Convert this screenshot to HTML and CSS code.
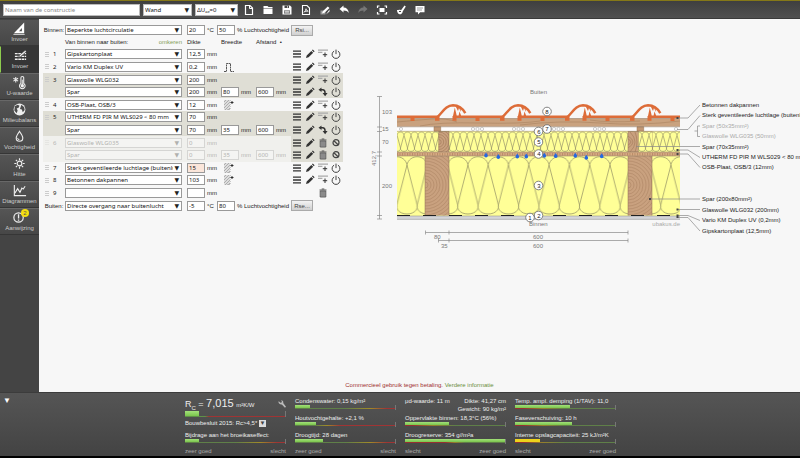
FILE: index.html
```html
<!DOCTYPE html>
<html lang="nl">
<head>
<meta charset="utf-8">
<title>U-waarde calculator</title>
<link rel="stylesheet" href="styles.css">
</head>
<body>
<svg class="defs" aria-hidden="true">
  <symbol id="list" viewBox="0 0 10 10"><path d="M1 2.2h8M1 5h8M1 7.8h8" stroke="#333" stroke-width="1.3"/></symbol>
  <symbol id="pencil" viewBox="0 0 10 10"><path d="M1 9l.7-2.6L6.3 1.9l1.900 1.900-4.600 4.500zM6.900 1.300L7.800.6l1.800 1.700-.8.9z" fill="#333"/></symbol>
  <symbol id="insert" viewBox="0 0 10 10"><path d="M0 1.200h10M0 3.300h4.400" stroke="#aaa" stroke-width="1.200"/><path d="M7 3.500v4.500M4.800 5.700h4.400" stroke="#333" stroke-width="1"/></symbol>
  <symbol id="power" viewBox="0 0 10 10"><path d="M3.100 2.100a3.900 3.900 0 1 0 3.800 0M5 .6v4.500" fill="none" stroke="#444" stroke-width="1"/></symbol>
  <symbol id="turn" viewBox="0 0 10 10"><path d="M2.500 2.800h2.200q2.300 0 2.300 2.800v1" fill="none" stroke="#333" stroke-width="1.500"/><path d="M3.500.5v4.600L.5 2.800zM4.600 6h5L7.100 9.300z" fill="#333"/></symbol>
  <symbol id="trash" viewBox="0 0 10 10"><path d="M1.500 2h7M3.700 1h2.600" stroke="#555" stroke-width="1"/><path d="M2.200 3h5.600v6H2.200z" fill="#aaa" stroke="#555" stroke-width=".9"/><path d="M4 3.500v5M6 3.500v5" stroke="#555" stroke-width=".7"/></symbol>
  <symbol id="ban" viewBox="0 0 10 10"><circle cx="5" cy="4.700" r="3" fill="none" stroke="#444" stroke-width="1.200"/><path d="M2.900 2.700l4.200 4" stroke="#444" stroke-width="1.200"/></symbol>
  <symbol id="hatch" viewBox="0 0 10 12"><path d="M0 1h6v10H0z" fill="#ddd"/><path d="M0 3l2-2M0 6l5-5M0 9l6-6M1 11l5-5M4 11l2-2" stroke="#999" stroke-width=".7"/><path d="M6.500 1v9.500H.5" fill="none" stroke="#aaa" stroke-width=".6" stroke-dasharray="1 1"/><path d="M8 2v3M6.500 3.500h3" stroke="#222" stroke-width=".9"/></symbol>
  <symbol id="pulse" viewBox="0 0 12 12"><path d="M1 10.500h2.500v-8h4v8H11" fill="none" stroke="#444" stroke-width=".9" stroke-dasharray="2 .5"/></symbol>
</svg>

<header class="topbar">
  <input class="field name" aria-label="Naam van de constructie" placeholder="Naam van de constructie">
  <span class="pick type"><select aria-label="Type"><option>Wand</option></select></span>
  <span class="pick delta"><select aria-label="Correctie"><option>ΔUₐₑ=0</option></select></span>
  <nav class="actions">
    <button aria-label="Nieuw"><svg viewBox="0 0 12 12"><path d="M2.500 1.500h4.500l2.500 2.500v6.500h-7z" fill="none" stroke="#fff" stroke-width="1.200"/><path d="M6.500 1.500v3h3" fill="none" stroke="#fff"/></svg></button>
    <button aria-label="Openen"><svg viewBox="0 0 12 12"><path d="M1.500 2h4l1 1h4v1.200h-9zM1.500 4.700h9v5.300h-9z" fill="#fff"/></svg></button>
    <button aria-label="Opslaan"><svg viewBox="0 0 12 12"><path d="M1.500 1.500h7.500l1.500 1.500v7.500h-9z" fill="#fff"/><path d="M3.500 1.500h4.500v2.500H3.500zM3 6.500h6v3H3z" fill="#484848"/><path d="M6.500 2v1.800M3.500 7.500h5M3.500 8.700h5" stroke="#fff" stroke-width=".7"/></svg></button>
    <button aria-label="PDF"><svg viewBox="0 0 12 12"><path d="M2.500 1.500h4.500l2.500 2.500v6.500h-7z" fill="none" stroke="#fff" stroke-width="1.100"/><path d="M6 4.500q0 2-2 4M6 5q.5 2 2.300 2.300M4.500 7.500l3.500-.5" fill="none" stroke="#fff" stroke-width=".8"/></svg></button>
    <button aria-label="Bewerken"><svg viewBox="0 0 12 12"><path d="M1.500 6.500h5v4h-5z" fill="#999"/><path d="M3 9.500l.8-2.300 5-4.700 1.700 1.600-5 4.700zM7 10.500l3.500-3v-2z" fill="#fff"/></svg></button>
    <button aria-label="Ongedaan maken"><svg viewBox="0 0 12 12"><path d="M1.500 5l4-3.500v2c3 0 5 2 5.300 5.500-1.300-1.800-3-2.500-5.300-2.500v2z" fill="#fff"/></svg></button>
    <button aria-label="Opnieuw"><svg viewBox="0 0 12 12"><path d="M10.500 5l-4-3.500v2c-3 0-5 2-5.300 5.500 1.300-1.800 3-2.500 5.300-2.500v2z" fill="#777"/></svg></button>
    <button aria-label="Volledig scherm"><svg viewBox="0 0 12 12"><path d="M1.500 4V2h2M8.500 2h2v2M10.500 8v2h-2M3.500 10h-2V8" fill="none" stroke="#fff" stroke-width="1.200"/><path d="M3.500 4h5v4h-5z" fill="#fff"/></svg></button>
    <button aria-label="Stijl"><svg viewBox="0 0 12 12"><path d="M2 6c2 0 2.500-.8 4 .3L9.500 1.500l1.300 1L7.700 7.500C7.500 9.500 6 10.500 4.500 10.300 3 10 2 8 2 6z" fill="#fff"/><path d="M4 7.500h2" stroke="#484848"/></svg></button>
    <button aria-label="Reactie"><svg viewBox="0 0 12 12"><path d="M1.500 2h9v6.300H6.200L4 10.500V8.300H1.500z" fill="#fff"/><path d="M3 4h6M3 6h5" stroke="#777" stroke-width=".7"/></svg></button>
  </nav>
</header>

<div class="work">
  <nav class="side">
    <a href="#"><svg viewBox="0 0 16 16"><path d="M2 13L13 1.500V13z" fill="#fff"/><path d="M7.500 11h3V7.500z" fill="#4c4c4c"/><path d="M1.500 14.300h12" stroke="#fff" stroke-width=".8"/></svg>Invoer</a>
    <a href="#" class="on"><svg viewBox="0 0 16 16"><path d="M2 6h12M2 9h12M2 12h12" stroke="#eee" stroke-width="1.400" stroke-dasharray="3 .6"/><path d="M6 10l1-2.500 6-5 1.300 1.500-6 5z" fill="#eee" stroke="#383838" stroke-width=".6"/></svg>Invoer</a>
    <a href="#"><svg viewBox="0 0 16 16"><path d="M4 2v6M1.500 3.500l5 3M6.500 3.500l-5 3" stroke="#eee" stroke-width="1.100"/><path d="M9.500 9V3a1.500 1.500 0 0 1 3 0v6a3 3 0 1 1-3 0z" fill="none" stroke="#eee" stroke-width="1.100"/><circle cx="11" cy="11.400" r="1.800" fill="#eee"/><path d="M11 5v6" stroke="#eee"/></svg>U-waarde</a>
    <a href="#"><svg viewBox="0 0 16 16"><circle cx="8" cy="8" r="6.300" fill="#eee"/><path d="M3 4.500L6 3l2 1-1 2-2 1 1 2-1 3-2.500-3zM10 3l3 2.500.5 3-2 2.500-1-3-2-.500z" fill="#4c4c4c"/></svg>Milieubalans</a>
    <a href="#"><svg viewBox="0 0 16 16"><path d="M8 2.500c2.200 3.200 3.500 5 3.500 7a3.500 3.500 0 0 1-7 0c0-2 1.300-3.800 3.500-7z" fill="none" stroke="#eee" stroke-width="1.200"/><path d="M6 9.500a2 2 0 0 0 2 2" fill="none" stroke="#eee"/></svg>Vochtigheid</a>
    <a href="#"><svg viewBox="0 0 16 16"><circle cx="8" cy="8" r="2.500" fill="none" stroke="#eee" stroke-width="1.200"/><path d="M8 2.500v2M8 11.500v2M2.500 8h2M11.500 8h2M4.100 4.100l1.400 1.400M10.500 10.500l1.400 1.400M4.100 11.900l1.400-1.400M10.500 5.500l1.400-1.400" stroke="#eee" stroke-width="1.200"/></svg>Hitte</a>
    <a href="#"><svg viewBox="0 0 16 16"><path d="M2.500 2v11.500H15" fill="none" stroke="#eee" stroke-width="1.200"/><path d="M3 11l3-5 2.500 4 2-4.500 1.500 1L14 3.500" fill="none" stroke="#eee" stroke-width="1.200"/></svg>Diagrammen</a>
    <a href="#"><svg viewBox="0 0 16 16"><circle cx="7" cy="8" r="5" fill="none" stroke="#eee" stroke-width="1.300"/><path d="M7 4.500v4.500M7 10v1.500" stroke="#eee" stroke-width="1.400"/></svg><span class="badge">2</span>Aanwijzing</a>
  </nav>

  <main class="main">
    <div class="panes">
      <form class="layers">
        <div class="row climate">
          <span class="side-name">Binnen:</span>
          <span class="pick"><select aria-label="Binnen"><option>Beperkte luchtcirculatie</option></select></span>
          <input class="field" aria-label="Temperatuur binnen" value="20"><span class="unit">°C</span>
          <input class="field" aria-label="Vochtigheid binnen" value="50"><span class="unit">% Luchtvochtigheid</span>
          <button type="button" class="push">Rsi...</button>
        </div>
        <div class="row heads">
          <span class="inside">Van binnen naar buiten:</span><a href="#" class="swap">omkeren</a>
          <span class="h-thick">Dikte</span><span class="h-width">Breedte</span><span class="h-dist">Afstand &nbsp;•</span>
        </div>
        <div class="stack">
          <div class="row"><span class="num">1</span><span class="pick"><select aria-label="Laag 1"><option>Gipskartonplaat</option></select></span><input class="field" aria-label="Dikte 1" value="12,5"><span class="unit">mm</span><span class="tools"><svg><use href="#list"/></svg><svg><use href="#pencil"/></svg><svg><use href="#insert"/></svg><svg><use href="#power"/></svg></span></div>
          <div class="row"><span class="num">2</span><span class="pick"><select aria-label="Laag 2"><option>Vario KM Duplex UV</option></select></span><input class="field" aria-label="Dikte 2" value="0,2"><span class="unit">mm</span><svg class="extra"><use href="#pulse"/></svg><span class="tools"><svg><use href="#list"/></svg><svg><use href="#pencil"/></svg><svg><use href="#insert"/></svg><svg><use href="#power"/></svg></span></div>
          <div class="row group"><span class="num">3</span><span class="pick"><select aria-label="Laag 3"><option>Glaswolle WLG032</option></select></span><input class="field" aria-label="Dikte 3" value="200"><span class="unit">mm</span><span class="tools"><svg><use href="#list"/></svg><svg><use href="#pencil"/></svg><svg><use href="#insert"/></svg><svg><use href="#power"/></svg></span></div>
          <div class="row group sub"><span class="pick"><select aria-label="Laag 3 balk"><option>Spar</option></select></span><input class="field" aria-label="Dikte balk 3" value="200"><span class="unit">mm</span><input class="field" aria-label="Breedte balk 3" value="80"><span class="unit">mm</span><input class="field" aria-label="Afstand balk 3" value="600"><span class="unit">mm</span><span class="tools"><svg><use href="#list"/></svg><svg><use href="#pencil"/></svg><svg><use href="#turn"/></svg><svg><use href="#power"/></svg></span></div>
          <div class="row"><span class="num">4</span><span class="pick"><select aria-label="Laag 4"><option>OSB-Plaat, OSB/3</option></select></span><input class="field" aria-label="Dikte 4" value="12"><span class="unit">mm</span><svg class="extra"><use href="#hatch"/></svg><span class="tools"><svg><use href="#list"/></svg><svg><use href="#pencil"/></svg><svg><use href="#insert"/></svg><svg><use href="#power"/></svg></span></div>
          <div class="row group"><span class="num">5</span><span class="pick"><select aria-label="Laag 5"><option>UTHERM FD PIR M WLS029 &lt; 80 mm</option></select></span><input class="field" aria-label="Dikte 5" value="70"><span class="unit">mm</span><span class="tools"><svg><use href="#list"/></svg><svg><use href="#pencil"/></svg><svg><use href="#insert"/></svg><svg><use href="#power"/></svg></span></div>
          <div class="row group sub"><span class="pick"><select aria-label="Laag 5 balk"><option>Spar</option></select></span><input class="field" aria-label="Dikte balk 5" value="70"><span class="unit">mm</span><input class="field" aria-label="Breedte balk 5" value="35"><span class="unit">mm</span><input class="field" aria-label="Afstand balk 5" value="600"><span class="unit">mm</span><span class="tools"><svg><use href="#list"/></svg><svg><use href="#pencil"/></svg><svg><use href="#turn"/></svg><svg><use href="#power"/></svg></span></div>
          <div class="row off"><span class="num">6</span><span class="pick"><select aria-label="Laag 6"><option>Glaswolle WLG035</option></select></span><input class="field" aria-label="Dikte 6" value="0"><span class="unit">mm</span><span class="tools"><svg><use href="#list"/></svg><svg><use href="#pencil"/></svg><svg><use href="#trash"/></svg><svg><use href="#ban"/></svg></span></div>
          <div class="row off sub"><span class="pick"><select aria-label="Laag 6 balk"><option>Spar</option></select></span><input class="field" aria-label="Dikte balk 6" value="0"><span class="unit">mm</span><input class="field" aria-label="Breedte balk 6" value="35"><span class="unit">mm</span><input class="field" aria-label="Afstand balk 6" value="600"><span class="unit">mm</span><span class="tools"><svg><use href="#list"/></svg><svg><use href="#pencil"/></svg><svg><use href="#trash"/></svg><svg><use href="#ban"/></svg></span></div>
          <div class="row"><span class="num">7</span><span class="pick"><select aria-label="Laag 7"><option>Sterk geventileerde luchtlage (buitenlucht)</option></select></span><input class="field warn" aria-label="Dikte 7" value="15"><span class="unit">mm</span><svg class="extra"><use href="#hatch"/></svg><span class="tools"><svg><use href="#list"/></svg><svg><use href="#pencil"/></svg><svg><use href="#insert"/></svg><svg><use href="#power"/></svg></span></div>
          <div class="row"><span class="num">8</span><span class="pick"><select aria-label="Laag 8"><option>Betonnen dakpannen</option></select></span><input class="field" aria-label="Dikte 8" value="103"><span class="unit">mm</span><svg class="extra"><use href="#hatch"/></svg><span class="tools"><svg><use href="#list"/></svg><svg><use href="#pencil"/></svg><svg><use href="#insert"/></svg><svg><use href="#power"/></svg></span></div>
          <div class="row"><span class="num">9</span><span class="pick"><select aria-label="Laag 9"><option></option></select></span><input class="field" aria-label="Dikte 9"><span class="unit">mm</span><span class="tools"><span></span><span></span><svg><use href="#trash"/></svg></span></div>
          <div class="row climate">
            <span class="side-name">Buiten:</span>
            <span class="pick"><select aria-label="Buiten"><option>Directe overgang naar buitenlucht</option></select></span>
            <input class="field" aria-label="Temperatuur buiten" value="-5"><span class="unit">°C</span>
            <input class="field" aria-label="Vochtigheid buiten" value="80"><span class="unit">% Luchtvochtigheid</span>
            <button type="button" class="push">Rse...</button>
          </div>
        </div>
      </form>

      <div class="drawing">
        <svg viewBox="360 80 440 175" role="img" aria-label="Doorsnede van de constructie">
          <defs>
            <pattern id="wool" patternUnits="userSpaceOnUse" x="407" y="156" width="20.300" height="60">
              <g fill="none" stroke="#9c9a68" stroke-width=".8">
                <path d="M0 9L10.150 49M20.300 9L10.150 49M0 9C2 -2 18.300 -2 20.300 9"/>
                <path d="M0 9L-10.150 49C-12 61 12 61 10.150 49M20.300 9L30.450 49M10.150 49C8.300 61 32.300 61 30.450 49"/>
              </g>
            </pattern>
            <pattern id="pir" patternUnits="userSpaceOnUse" x="397" y="131" width="7" height="21">
              <g fill="none" stroke="#98956a" stroke-width=".7">
                <path d="M0 4L3.500 17M7 4L3.500 17M0 4C1 0 6 0 7 4M-3.500 17C-4 21.500 4 21.500 3.500 17M3.500 17C3 21.500 11 21.500 10.500 17"/>
              </g>
            </pattern>
            <pattern id="osb" patternUnits="userSpaceOnUse" x="397" y="152" width="2.500" height="4"><path d="M0 0h3v4H0z" fill="#d5aa83"/><path d="M.5 1v2.500" stroke="#aa7d58" stroke-width=".7"/></pattern>
            <clipPath id="cut"><path d="M397 100h283v120H397z"/></clipPath>
            <clipPath id="beamA"><path d="M425 156h24v59.500h-24z"/></clipPath>
            <clipPath id="beamB"><path d="M438.700 131.500H449V152h-10.300z"/></clipPath>
            <g id="post">
              <path d="M425 156h24v59.500h-24zM438.700 131.500H449V152h-10.300z" fill="#c9a17f"/>
              <path d="M434 126.700h6.700v4.500H434z" fill="#c39874" stroke="#99714f" stroke-width=".5"/>
              <g clip-path="url(#beamA)" fill="none" stroke="#b18a69" stroke-width=".7">
                <circle cx="425" cy="185" r="3"/><circle cx="425" cy="185" r="6"/><circle cx="425" cy="185" r="9"/><circle cx="425" cy="185" r="12"/><circle cx="425" cy="185" r="15"/><circle cx="425" cy="185" r="18"/><circle cx="425" cy="185" r="21"/><circle cx="425" cy="185" r="24"/><circle cx="425" cy="185" r="27"/><circle cx="425" cy="185" r="30"/><circle cx="425" cy="185" r="33"/><circle cx="425" cy="185" r="36"/>
              </g>
              <g clip-path="url(#beamB)" fill="none" stroke="#a67e5d" stroke-width=".7">
                <circle cx="438.700" cy="142" r="2.500"/><circle cx="438.700" cy="142" r="5"/><circle cx="438.700" cy="142" r="7.500"/><circle cx="438.700" cy="142" r="10"/><circle cx="438.700" cy="142" r="12.500"/>
              </g>
              <path d="M425 156v59.500M449 131.500v84M438.700 152v-20.500H449" fill="none" stroke="#8f6f55" stroke-width=".5"/>
            </g>
            <g id="pan" fill="#dd6c38">
              <path d="M388 115.500h50v2.500h-50zM410.500 117h4v4h-4zM387.500 116h4v4.700h-4zM388 116l1.800-8.500 2 8.500zM393.500 116l1-4.500 1.800 4.500zM435 116.500h4.500v4.200H435z"/>
              <path d="M437 117.500C443 112 445.500 105.500 453 105.200c6 0 9.500 2.800 12.300 8" fill="none" stroke="#dd6c38" stroke-width="2.500"/>
              <path d="M455 105l3 6 1-3 2 4-.5-5z"/>
            </g>
            <path id="drop" d="M0-2.300C1.300-.5 1.800.2 1.800 1a1.800 1.800 0 0 1-3.600 0C-1.800.2-1.300-.5 0-2.300z" fill="#2468e0"/>
          </defs>
          <g clip-path="url(#cut)">
            <path d="M397 118.500h283v8.300H397z" fill="#c9a27f"/>
            <path d="M397 122q20-2 35-3t25 3M420 126q18-4 60-3t60-2M520 125q40-5 80-2t80-2M590 120q18 3 50 1" fill="none" stroke="#aa835f" stroke-width=".6"/>
            <path d="M397 126.800h283v4.500H397z" fill="#fff"/>
            <path d="M397 131.300h283V152H397zM397 156h283v60H397z" fill="#ffff97"/>
            <path d="M397 131.300h283V152H397z" fill="url(#pir)"/>
            <path d="M397 156h283v60H397z" fill="url(#wool)"/>
            <use href="#post"/><use href="#post" x="203"/>
            <path d="M628 131.500h10.500V152H628z" fill="#c9a17f" stroke="#8f6f55" stroke-width=".5"/>
            <path d="M628 139q6 3 0 6M628 136q10 6 0 12M630 132q10 10 0 20M635 132q4 10 0 20" fill="none" stroke="#a67e5d" stroke-width=".7"/>
            <path d="M638.800 131.500H652V152h-13.200z" fill="#ffff97"/><path d="M638.800 131.500H652V152h-13.200z" fill="url(#pir)"/>
            <path d="M397 152h283v4H397z" fill="url(#osb)"/>
            <path d="M397 118.500h283M397 126.800h283M397 131.300h283M397 152h283M397 156h283" stroke="#8b7561" stroke-width=".5"/>
            <path d="M397 216h283v3.500H397z" fill="#d4d5d8"/>
            <path d="M397 216h283M397 219.300h283" stroke="#999" stroke-width=".6"/>
            <path d="M397 215.500h283" stroke="#222" stroke-width="1" stroke-dasharray="13 13"/>
            <use href="#pan"/><use href="#pan" x="65"/><use href="#pan" x="130"/><use href="#pan" x="195"/><use href="#pan" x="260"/>
          </g>
          <g fill="#fff" stroke="#aaa" stroke-width=".6">
            <circle cx="401" cy="129" r="1.600"/><circle cx="473" cy="129" r="1.600"/><circle cx="477.500" cy="129" r="1.600"/><circle cx="482" cy="129" r="1.600"/><circle cx="514" cy="129" r="1.600"/><circle cx="518.500" cy="129" r="1.600"/><circle cx="523" cy="129" r="1.600"/><circle cx="554" cy="129" r="1.600"/><circle cx="558.500" cy="129" r="1.600"/><circle cx="563" cy="129" r="1.600"/><circle cx="595" cy="129" r="1.600"/><circle cx="599.500" cy="129" r="1.600"/><circle cx="604" cy="129" r="1.600"/><circle cx="676" cy="129" r="1.600"/>
          </g>
          <use href="#drop" x="486" y="154.700"/><use href="#drop" x="498.300" y="156.300"/><use href="#drop" x="517.300" y="155.700"/><use href="#drop" x="526.300" y="155.700"/><use href="#drop" x="544.300" y="155"/><use href="#drop" x="555.700" y="155.300"/><use href="#drop" x="575.300" y="155"/><use href="#drop" x="586.300" y="157"/><use href="#drop" x="601.700" y="155.500"/>
          <g fill="none" stroke="#888" stroke-width=".7">
            <path d="M379.500 96.500v122.500M377 96.500h5M377 127h5M377 131.500h5M377 152h5M377 156h5M377 215.500h5M377 219h5"/>
            <path d="M425.500 232.500H628M425.500 230.500v4M449 230.500v4M628 230.500v4M438.500 240.500H628M438.500 238.500v4M449 238.500v4M628 238.500v4"/>
            <path d="M677 118h11l12-13M677 129.500h11l12-14M700 126h-2.500v10.500h2.500M697.500 131h-3" />
            <path d="M636 146.500h64M677 150h11l12 7.500M677 154h11l12 13.500M650 199h50M677 209.500h23M677 215.500h11l12 5M677 217.500h11l12 13.500"/>
          </g>
          <path d="M676.500 117h2v2h-2zM676.500 149h2v2h-2zM676.500 153h2v2h-2zM649 198h2v2h-2zM676.500 208.500h2v2h-2zM676.500 214.500h2v3.500h-2z" fill="#444"/>
          <g class="note">
            <text x="530" y="94">Buiten</text><text x="529" y="226">Binnen</text>
            <text x="382" y="114">103</text><text x="382" y="131">15</text><text x="382" y="144">70</text><text x="382" y="188">200</text>
            <text transform="translate(376 166) rotate(-90)">412,7</text>
            <text x="434" y="239">80</text><text x="441" y="248">35</text><text x="533" y="239">600</text><text x="533" y="248">600</text>
            <text class="pale" x="680" y="226" text-anchor="end">ubakus.de</text>
          </g>
          <g class="tag">
            <text x="702" y="107">Betonnen dakpannen</text>
            <text x="702" y="117">Sterk geventileerde luchtlage (buitenlucht)</text>
            <text x="702" y="128" class="pale">Spar (50x35mm²)</text>
            <text x="702" y="138" class="pale">Glaswolle WLG035 (50mm)</text>
            <text x="702" y="149">Spar (70x35mm²)</text>
            <text x="702" y="159">UTHERM FD PIR M WLS029 &lt; 80 mm (70mm)</text>
            <text x="702" y="169">OSB-Plaat, OSB/3 (12mm)</text>
            <text x="702" y="201">Spar (200x80mm²)</text>
            <text x="702" y="212">Glaswolle WLG032 (200mm)</text>
            <text x="702" y="222">Vario KM Duplex UV (0,2mm)</text>
            <text x="702" y="233">Gipskartonplaat (12,5mm)</text>
          </g>
          <g fill="#fff" stroke="#666" stroke-width=".8">
            <circle cx="547" cy="111.500" r="4.300"/><circle cx="547" cy="129" r="4.300"/><circle cx="538.500" cy="131.500" r="4.300"/><circle cx="538.500" cy="142" r="4.300"/><circle cx="538.500" cy="154" r="4.300"/><circle cx="538.500" cy="185.500" r="4.300"/><circle cx="538.500" cy="215.500" r="4.300"/><circle cx="530" cy="217.500" r="4.300"/>
          </g>
          <g class="mark">
            <text x="547" y="114">8</text><text x="547" y="131">7</text><text x="539" y="134">6</text><text x="539" y="144">5</text><text x="539" y="156">4</text><text x="539" y="188">3</text><text x="539" y="218">2</text><text x="530" y="220">1</text>
          </g>
        </svg>
      </div>
    </div>
    <p class="license">Commercieel gebruik tegen betaling. <a href="#">Verdere informatie</a></p>
  </main>
</div>

<footer class="results">
  <button class="fold" aria-label="Inklappen">▼</button>
  <section class="col">
    <div class="lead">
      <p class="rc"><span>R<sub>C</sub> = <b>7,015</b> <small>m²K/W</small></span><svg viewBox="0 0 10 10"><path d="M1 1.500l2 1.800 1.500-.3.300-1.700L3.500.2C6 0 7.200 2 6.500 3.800L10 8.500 8.700 9.700 4.800 5.500C3 6 1 5 .5 2.500z" fill="#bbb"/></svg></p>
      <div class="bar big"><i style="width:14%"></i><u class="fail"></u></div>
      <p>Bouwbesluit 2015: Rc&gt;4,5* <button class="mini" aria-label="Eis kiezen">▼</button></p>
    </div>
    <div class="metric"><p>Bijdrage aan het broeikaseffect:</p><div class="bar"><i style="width:14%"></i><u class="gr"></u></div></div>
    <p class="scale"><span>zeer goed</span><span>slecht</span></p>
  </section>
  <section class="col">
    <div class="metric"><p>Condenswater: 0,15 kg/m²</p><div class="bar"><i style="width:15%"></i><u class="gr"></u></div></div>
    <div class="metric"><p>Houtvochtgehalte: +2,1 %</p><div class="bar"><i style="width:21%"></i><u class="mid"></u></div></div>
    <div class="metric"><p>Droogtijd: 28 dagen</p><div class="bar"><i style="width:28%"></i><u class="gr"></u></div></div>
    <p class="scale"><span>zeer goed</span><span>slecht</span></p>
  </section>
  <section class="col">
    <div class="metric pair"><p><span>μd-waarde: 11 m</span><span>Dikte: 41,27 cm</span></p><p class="right">Gewicht: 90 kg/m²</p></div>
    <div class="metric"><p>Oppervlakte binnen: 18,3°C (56%)</p><div class="bar"><i style="width:44%"></i><u class="rg"></u></div></div>
    <div class="metric"><p>Droogreserve: 354 g//m²a</p><div class="bar"><i style="width:100%"></i><u class="half"></u></div></div>
    <p class="scale"><span>slecht</span><span>zeer goed</span></p>
  </section>
  <section class="col">
    <div class="metric"><p>Temp. ampl. demping (1/TAV): 11,0</p><div class="bar"><i style="width:55%"></i><u class="rg"></u></div></div>
    <div class="metric"><p>Faseverschuiving: 10 h</p><div class="bar"><i style="width:57%"></i><u class="rg"></u></div></div>
    <div class="metric"><p>Interne opslagcapaciteit: 25 kJ/m²K</p><div class="bar"><i class="yellow" style="width:25%"></i><u class="rg"></u></div></div>
    <p class="scale"><span>slecht</span><span>zeer goed</span></p>
  </section>
</footer>
</body>
</html>
```
FILE: styles.css
```css
* { box-sizing: border-box; }
body { margin: 0; min-height: 100vh; display: flex; flex-direction: column; background: #f7f7f7; color: #222; font: 6px/8px "Liberation Sans", Arial, sans-serif; overflow-x: hidden; }
p { margin: 0; }
a { text-decoration: none; color: inherit; }
button { border: 0; background: none; padding: 0; font: inherit; color: inherit; cursor: pointer; }
.defs { position: absolute; width: 0; height: 0; }

.field, select { height: 10px; width: 100%; min-width: 0; border: 1px solid #999; background: #fff; color: #111; padding: 0 1px; margin: 0; border-radius: 0; font: 6px/8px "Noto Sans", "DejaVu Sans", sans-serif; outline: 0; }
select { appearance: none; padding-right: 8px; display: block; }
.pick { position: relative; display: block; }
.pick::after { content: "▼"; position: absolute; right: 3px; top: 1px; font: 6px/8px "DejaVu Sans", sans-serif; color: #222; pointer-events: none; }

.topbar { height: 19px; display: flex; align-items: center; padding: 0 3px; border-top: 1px solid #857818; background: linear-gradient(#3f3f3f, #505050); border-bottom: 1px solid #3a3a3a; }
.topbar .field, .topbar select { height: 12px; border-color: #bbb; }
.topbar .pick::after { top: 2px; }
.name { width: 137px; }
.name::placeholder { color: #888; }
.type { width: 49px; margin: 0 3px; }
.delta { width: 43px; }
.actions { display: flex; gap: 7px; margin-left: 5px; }
.actions button, .actions svg { width: 12px; height: 12px; display: block; }
.actions svg { overflow: visible; }

.work { flex: 1; display: flex; }
.side { width: 39px; flex: none; background: #444; }
.side a { position: relative; display: flex; flex-direction: column; align-items: center; height: 27px; padding-top: 1px; border-top: 1px solid #686868; border-bottom: 1px solid #363636; background: linear-gradient(#555, #474747); color: #ccc; line-height: 6px; }
.side a:first-child { border-top-color: #444; }
.side .on { background: #363636; border-left: 1px solid #8dcc4e; border-top-color: #363636; }
.side svg { width: 15px; height: 15px; flex: none; }
.badge { position: absolute; left: 21px; top: 0; width: 8px; height: 8px; border-radius: 50%; background: #f5e010; color: #555; text-align: center; line-height: 8px; }

.main { flex: 1; min-width: 0; display: flex; flex-direction: column; }
.panes { flex: 1; display: flex; align-items: flex-start; padding: 5px 0 0 4px; }
.layers { width: 300px; flex: none; }
.row { display: grid; grid-template-columns: 22px 122px 18px 16px 18px 17px 18px 17px 52px; align-items: center; min-height: 12px; }
.climate { grid-template-columns: 22px 122px 18px 12px 18px 56px 22px; }
.climate .unit { white-space: nowrap; }
.row .pick { margin-right: 5px; }
.side-name { text-align: center; }
.unit { padding-left: 2px; }
.push { height: 11px; border: 1px solid #aaa; background: linear-gradient(#f3f3f3, #d0d0d0); color: #444; }
.heads .inside { grid-column: 2; grid-row: 1; }
.heads .swap { grid-column: 2; grid-row: 1; justify-self: end; margin-right: 5px; color: #84a05a; }
.heads .h-thick { grid-column: 3; }
.heads .h-width { grid-column: 5; }
.heads .h-dist { grid-column: 7; white-space: nowrap; }
.stack { display: grid; grid-auto-rows: 1fr; height: 164px; }
.num { display: flex; align-items: center; gap: 4px; padding-left: 2px; font-family: "Noto Sans", sans-serif; }
.num::before { content: ""; width: 4px; height: 5px; background: repeating-linear-gradient(#ccc 0 1px, transparent 1px 2px); }
.sub .pick { grid-column: 2; }
.group { background: #dfded5; }
.tools { grid-column: 9; display: grid; grid-template-columns: repeat(4, 13px); align-items: center; align-self: stretch; }
.tools svg { width: 10px; height: 10px; margin-left: 1px; }
.extra { width: 12px; height: 12px; margin-left: 2px; }
.off { background: #f0f0ed; }
.off .pick, .off .field, .off .unit, .off .num { opacity: .3; }
.off .tools { background: #dfded5; }
.warn { background: #fbe6da; }

.drawing { flex: 1; min-width: 0; padding: 56px 0 0 17px; }
.drawing svg { display: block; width: 100%; height: auto; }
.note { fill: #777; }
.tag { fill: #222; }
.tag .pale, .note .pale { fill: #aaa; }
.mark { fill: #222; text-anchor: middle; }
.license { text-align: center; color: #a03030; margin-bottom: 3px; }
.license a { color: #6b8e3d; }

.results { height: 66px; display: flex; gap: 9px; padding: 4px 3px 0; border-top: 1px solid #3c3c3c; border-bottom: 2px solid #000; background: linear-gradient(#555, #434343); color: #eee; }
.fold { width: 173px; flex: none; align-self: flex-start; text-align: left; color: #fff; font-size: 8px; }
.col { width: 101px; flex: none; white-space: nowrap; }
.lead { height: 34px; }
.rc { display: flex; justify-content: space-between; align-items: center; height: 14px; font-size: 9px; line-height: 12px; }
.rc b { font-size: 11px; font-weight: normal; }
.rc sub { font-size: 6px; line-height: 1; }
.rc small { font-size: 6px; }
.rc svg { width: 8px; height: 8px; }
.mini { background: #ddd; color: #444; width: 7px; height: 7px; line-height: 7px; }
.metric { height: 17px; }
.pair p:first-child { display: flex; justify-content: space-between; }
.right { text-align: right; }
.bar { height: 5px; border-right: 1px solid #777; }
.bar i { display: block; height: 3px; background: linear-gradient(#a3e07a, #7ac44c); }
.bar u { display: block; height: 1px; }
.big { height: 6px; margin-bottom: 2px; }
.big i { height: 5px; }
.bar .yellow { background: #ecd21c; }
.fail { background: linear-gradient(90deg, #5f9048 20%, #a03434 24%); }
.gr { background: linear-gradient(90deg, #5f7f48 50%, #a08a28 75%, #a03434 92%); }
.mid { background: linear-gradient(90deg, #5f7f48 20%, #a08a28 32%, #a03434 45%); }
.rg { background: linear-gradient(90deg, #963030 8%, #94802c 28%, #5f7f48 50%); }
.half { background: linear-gradient(90deg, #963030 40%, #94802c 50%, #5f7f48 60%); }
.scale { display: flex; justify-content: space-between; line-height: 6px; color: #aaa; }
```
